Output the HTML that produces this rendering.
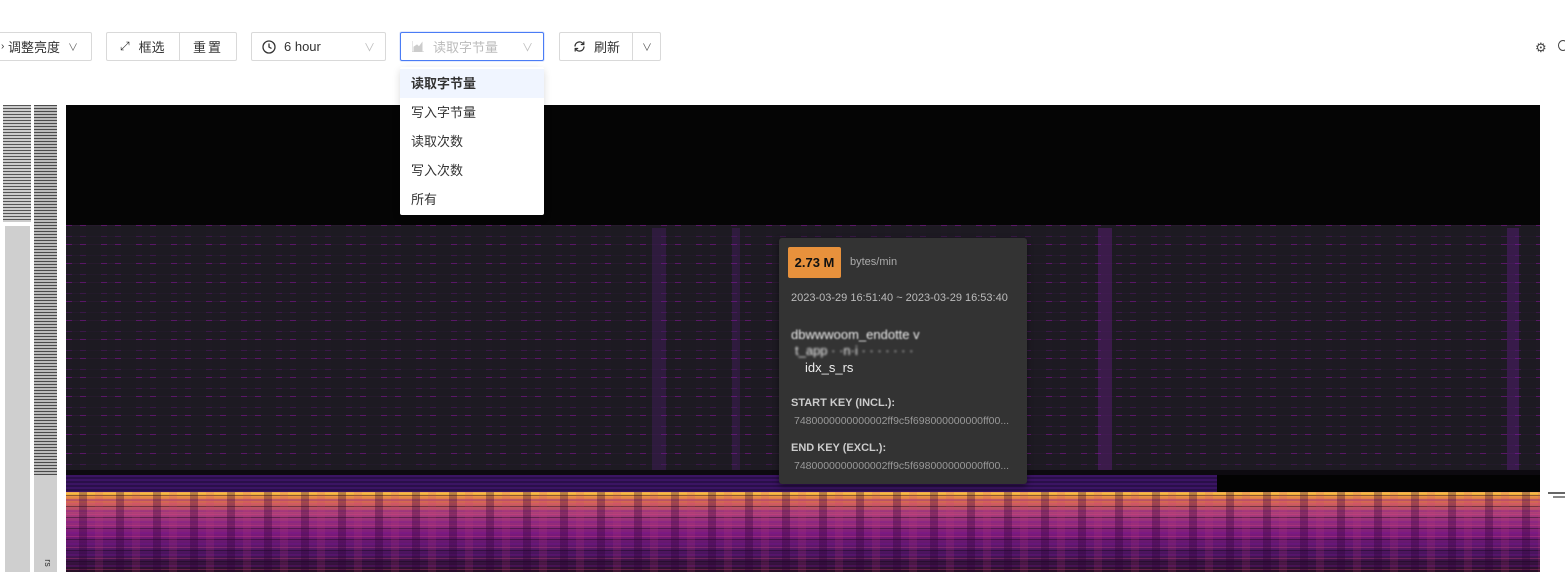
<!DOCTYPE html>
<html><head><meta charset="utf-8"><style>
*{box-sizing:border-box;margin:0;padding:0}
body{width:1565px;height:572px;overflow:hidden;background:#fff;position:relative;font-family:"Liberation Sans","Noto Sans CJK SC",sans-serif;font-size:13px;color:#333}
.btn{position:absolute;top:32px;height:29px;border:1px solid #d9d9d9;border-radius:2px;background:#fff;display:flex;align-items:center;font-size:13px;color:#333}
.abs{position:absolute}
.dd div{height:29px;line-height:29px;padding-left:11px;font-size:13px;color:#333}
</style></head><body>
<div class="btn" style="left:-4px;width:96px;padding-left:4px"><span style="font-size:10px">›</span>&nbsp;调整亮度 <span style="margin-left:8px;font-size:10px;color:#666">∨</span></div>
<div class="btn" style="left:106px;width:131px">
 <div style="width:73px;border-right:1px solid #d9d9d9;height:100%;display:flex;align-items:center;padding-left:13px"><span style="font-size:12px;margin-right:9px">⤢</span>框选</div>
 <div style="padding-left:13px;letter-spacing:2px">重置</div></div>
<div class="btn" style="left:251px;width:135px;padding-left:10px">
 <svg width="14" height="14" viewBox="0 0 14 14"><circle cx="7" cy="7" r="6" fill="none" stroke="#333" stroke-width="1.3"/><path d="M7 3.5V7l2.5 1.5" fill="none" stroke="#333" stroke-width="1.3"/></svg>
 <span style="margin-left:8px">6 hour</span><span style="position:absolute;right:10px;color:#bbb;font-size:11px">∨</span></div>
<div class="btn" style="left:400px;width:144px;padding-left:11px;border-color:#4a7cf5;box-shadow:0 0 0 1px rgba(74,124,245,.15)">
 <svg width="12" height="11" viewBox="0 0 12 11"><path d="M0 11V0M0 11h12M2 10V6l3-2 2 2 3-4v8z" fill="#ccc" stroke="#ccc" stroke-width="1"/></svg>
 <span style="margin-left:9px;color:#bbb">读取字节量</span><span style="position:absolute;right:10px;color:#bbb;font-size:11px">∨</span></div>
<div class="btn" style="left:559px;width:102px">
 <div style="width:73px;border-right:1px solid #d9d9d9;height:100%;display:flex;align-items:center;padding-left:13px">
 <svg width="13" height="13" viewBox="0 0 13 13"><path d="M11 6.5A4.5 4.5 0 0 1 2.7 9M2 6.5A4.5 4.5 0 0 1 10.3 4" fill="none" stroke="#333" stroke-width="1.3"/><path d="M10.8 1.5v3h-3M2.2 11.5v-3h3" fill="none" stroke="#333" stroke-width="1.2"/></svg>
 <span style="margin-left:8px">刷新</span></div>
 <div style="padding-left:9px;font-size:10px;color:#555">∨</div></div>
<div class="abs" style="left:1535px;top:40px;font-size:13px;color:#444">⚙</div>
<div class="abs" style="left:1558px;top:40px;width:10px;height:11px;border:1.5px solid #444;border-radius:50%"></div>

<div class="abs" style="left:3px;top:105px;width:28px;height:117px;background:repeating-linear-gradient(#555 0 1px,#ccc 1px 3px)"></div>
<div class="abs" style="left:5px;top:226px;width:25px;height:346px;background:#cfcfcf"></div>
<div class="abs" style="left:34px;top:105px;width:23px;height:370px;background:repeating-linear-gradient(#4a4a4a 0 1px,#bbb 1px 3px)"></div>
<div class="abs" style="left:34px;top:475px;width:23px;height:97px;background:#cfcfcf"></div>
<div class="abs" style="left:44px;top:558px;font-size:9px;color:#333;transform:rotate(90deg)">rs</div>

<div class="abs" style="left:66px;top:105px;width:1474px;height:120px;background:#050505"></div>
<div class="abs" style="left:66px;top:225px;width:1474px;height:245px;background:
repeating-linear-gradient(90deg,transparent 0 6px,rgba(29,26,34,.75) 6px 14px,transparent 14px 20px,rgba(29,26,34,.85) 20px 35px),
repeating-linear-gradient(180deg,rgba(150,20,170,.5) 0 1px,transparent 1px 11px,rgba(110,20,140,.35) 11px 12px,transparent 12px 19px),#1e1a23"></div>
<div class="abs" style="left:652px;top:228px;width:14px;height:242px;background:rgba(110,30,160,.22)"></div>
<div class="abs" style="left:732px;top:228px;width:8px;height:242px;background:rgba(110,30,160,.22)"></div>
<div class="abs" style="left:1098px;top:228px;width:14px;height:242px;background:rgba(130,30,170,.3)"></div>
<div class="abs" style="left:1507px;top:228px;width:12px;height:242px;background:rgba(120,30,170,.3)"></div>
<div class="abs" style="left:66px;top:470px;width:1474px;height:5px;background:#0d0a10"></div>
<div class="abs" style="left:66px;top:475px;width:1151px;height:17px;background:repeating-linear-gradient(#3b1463 0 2px,#2a0f4a 2px 4px)"></div>
<div class="abs" style="left:1217px;top:475px;width:323px;height:17px;background:#030303"></div>
<div class="abs" style="left:66px;top:492px;width:1474px;height:80px;background:
repeating-linear-gradient(90deg,rgba(0,0,0,0) 0 13px,rgba(40,0,50,.3) 13px 21px,rgba(0,0,0,0) 21px 29px,rgba(200,60,120,.15) 29px 37px),
repeating-linear-gradient(180deg,rgba(230,70,130,.3) 0 1px,transparent 1px 3px,rgba(20,10,25,.45) 3px 4px,transparent 4px 7px,rgba(120,20,150,.3) 7px 9px,transparent 9px 11px),
linear-gradient(#f6dd3e 0,#f0a040 3px,#d66a50 9px,#a83c7a 22px,#7a1a7a 42px,#4c1560 60px,#261024 80px)"></div>
<div class="abs" style="left:1548px;top:492px;width:17px;height:2px;background:#666"></div>
<div class="abs" style="left:1553px;top:496px;width:12px;height:2px;background:#888"></div>

<div class="abs dd" style="left:400px;top:67px;width:144px;height:148px;background:#fff;border-radius:2px;box-shadow:0 3px 8px rgba(0,0,0,.15);padding-top:2px">
 <div style="background:#f0f5ff;font-weight:bold">读取字节量</div>
 <div>写入字节量</div><div>读取次数</div><div>写入次数</div><div>所有</div>
</div>

<div class="abs" style="left:779px;top:238px;width:248px;height:246px;background:#333;border-radius:3px;box-shadow:0 2px 6px rgba(0,0,0,.5);color:#ddd">
 <div class="abs" style="left:9px;top:9px;width:53px;height:31px;background:#e8913c;border-radius:2px;color:#111;font-weight:bold;font-size:13px;line-height:31px;text-align:center">2.73 M</div>
 <div class="abs" style="left:71px;top:18px;font-size:11px;color:#aaa">bytes/min</div>
 <div class="abs" style="left:12px;top:54px;font-size:11px;color:#bbb">2023-03-29 16:51:40 ~ 2023-03-29 16:53:40</div>
 <div class="abs" style="left:12px;top:89px;font-size:13px;color:#eee;filter:blur(0.8px)">dbwwwoom_endotte v</div>
 <div class="abs" style="left:16px;top:105px;font-size:13px;color:#eee;filter:blur(1px)">t_app · ·n·i · · · · · · ·</div>
 <div class="abs" style="left:26px;top:122px;font-size:13px;color:#eee">idx_s_rs</div>
 <div class="abs" style="left:12px;top:159px;font-size:11px;font-weight:bold;color:#ccc">START KEY (INCL.):</div>
 <div class="abs" style="left:15px;top:177px;font-size:10.5px;color:#999">7480000000000002ff9c5f698000000000ff00...</div>
 <div class="abs" style="left:12px;top:204px;font-size:11px;font-weight:bold;color:#ccc">END KEY (EXCL.):</div>
 <div class="abs" style="left:15px;top:222px;font-size:10.5px;color:#999">7480000000000002ff9c5f698000000000ff00...</div>
</div>
</body></html>
